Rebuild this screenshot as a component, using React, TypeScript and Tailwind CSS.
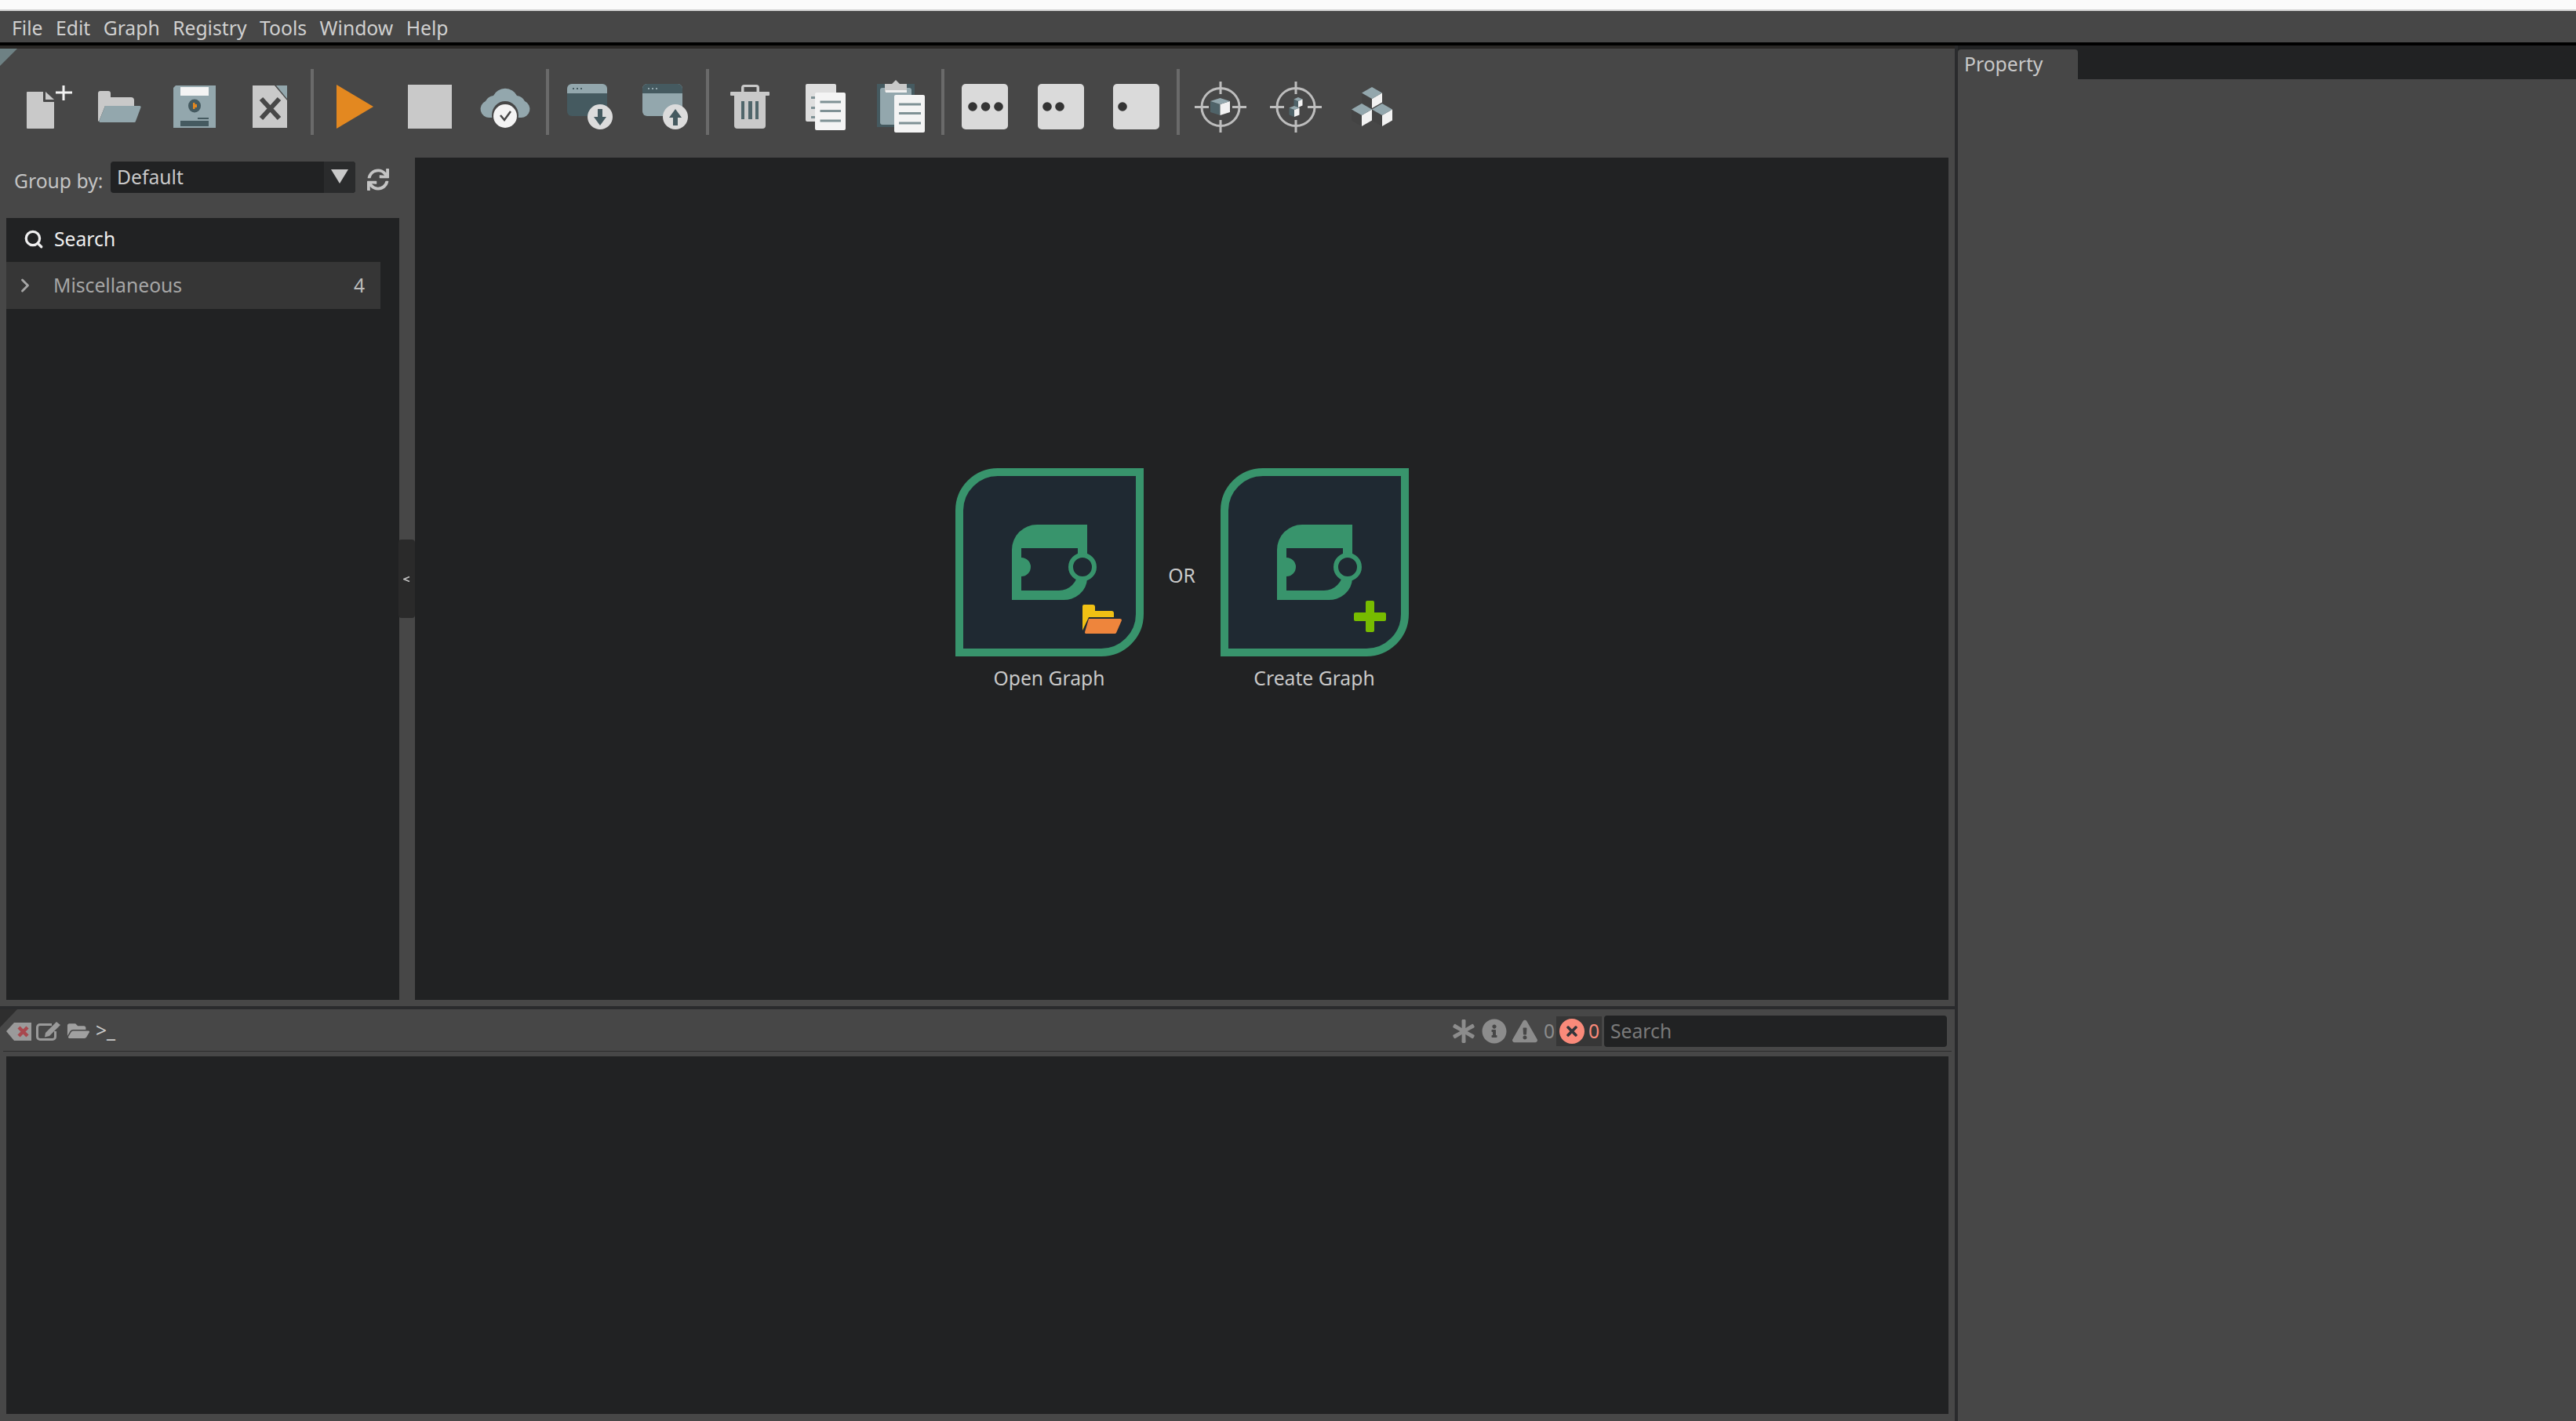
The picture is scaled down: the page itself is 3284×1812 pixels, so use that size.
import React from 'react';
import { ChevronRight, Search } from 'lucide-react';
import { FaAsterisk, FaExclamationTriangle, FaFolderOpen, FaInfoCircle, FaSync, FaTimes } from 'react-icons/fa';

const MENU = ['File', 'Edit', 'Graph', 'Registry', 'Tools', 'Window', 'Help'];

const BLUE = '#93a7ad';
const SLATE = '#455a60';
const LIGHT = '#c9c9c9';

const Ico: React.FC<{ children: React.ReactNode }> = ({ children }) => (
  <button className="w-[96px] h-[96px] shrink-0 -mb-[12px]">
    <svg className="block" width="96" height="96" viewBox="0 0 96 96">{children}</svg>
  </button>
);

const Sep = () => <div className="w-[4px] h-[84px] mx-[4px] shrink-0 bg-[#6a6a6a]" />;

const Cube = ({ cx, top, w, h, s, side = '#4f6369' }: { cx: number; top: number; w: number; h: number; s: number; side?: string }) => (
  <g>
    <path d={`M${cx - w / 2} ${top + h / 2}L${cx} ${top + h}V${top + h + s}L${cx - w / 2} ${top + h / 2 + s}Z`} fill={side} />
    <path d={`M${cx + w / 2} ${top + h / 2}L${cx} ${top + h}V${top + h + s}L${cx + w / 2} ${top + h / 2 + s}Z`} fill="#f2f2f2" />
    <path d={`M${cx} ${top}L${cx + w / 2} ${top + h / 2}L${cx} ${top + h}L${cx - w / 2} ${top + h / 2}Z`} fill={BLUE} />
  </g>
);

const Target = ({ children }: { children: React.ReactNode }) => (
  <Ico>
    <circle cx="48" cy="48.5" r="24" fill="none" stroke="#bdbdbd" strokeWidth="3" />
    <path d="M15 48.5H33M63 48.5H81M48 16V32M48 65V81" stroke="#bdbdbd" strokeWidth="3" fill="none" />
    {children}
  </Ico>
);

const Dots = ({ xs, x = 18 }: { xs: number[]; x?: number }) => (
  <Ico>
    <rect x={x} y="19" width="59" height="58" rx="5" fill="#dadada" />
    {xs.map((c) => (
      <circle key={c} cx={c} cy="48" r="5.8" fill="#343434" />
    ))}
  </Ico>
);

const Toolbar = () => (
  <div className="h-[139px] pl-[8px] pt-[26px] flex items-start relative">
    <div className="absolute left-0 top-0 w-0 h-0 border-t-[22px] border-r-[22px] border-t-[#6e8184] border-r-transparent" />
    <div className="flex items-center h-[84px]">
      <Ico>
        <path d="M27 29H47V41a1 1 0 0 0 1 1H61V75a1 1 0 0 1-1 1H27a1 1 0 0 1-1-1V30a1 1 0 0 1 1-1Z" fill={LIGHT} />
        <path d="M50 29L61 39H50Z" fill={LIGHT} />
        <path d="M73 21V40M63 30H84" stroke="#f2f2f2" strokeWidth="3" />
      </Ico>
      <Ico>
        <path d="M21 31a3 3 0 0 1 3-3H34a3 3 0 0 1 3 3V36H63a4 4 0 0 1 4 4V47H30L22 67L21 66Z" fill={LIGHT} />
        <path d="M30 47H74a1.5 1.5 0 0 1 1.5 2L69 66.500a2 2 0 0 1-2 1.500H24a1.500 1.500 0 0 1-1.500-2Z" fill={BLUE} />
      </Ico>
      <Ico>
        <path d="M24 21H75V75H21V24Z" fill={BLUE} />
        <rect x="30" y="23" width="36" height="11" fill="#f4f4f4" />
        <ellipse cx="48" cy="47" rx="8" ry="8.500" fill={SLATE} />
        <path d="M46 43H48.500V45H51V49H48.500V51H46Z" fill="#e38820" />
        <rect x="52" y="62" width="14" height="2" fill={SLATE} />
        <rect x="30" y="66" width="36" height="7" fill={SLATE} />
      </Ico>
      <Ico>
        <path d="M26 21H54L70 40V75H26Z" fill={LIGHT} />
        <path d="M56 21H70V38Z" fill={BLUE} />
        <path d="M37 38L60 63M60 38L37 63" stroke="#474747" strokeWidth="6" fill="none" />
      </Ico>
      <Sep />
      <Ico>
        <path d="M25 20L72 48L25 76Z" fill="#e38820" />
      </Ico>
      <Ico>
        <rect x="20" y="20" width="56" height="56" fill={LIGHT} />
      </Ico>
      <Ico>
        <path d="M28 62a11 11 0 0 1-5-21a13 13 0 0 1 10-7a16 14 0 0 1 30 0a13 13 0 0 1 10 7a11 11 0 0 1-5 21Z" fill={BLUE} />
        <ellipse cx="48" cy="59" rx="17" ry="18" fill="#474747" />
        <ellipse cx="48" cy="60" rx="15" ry="15" fill="#f4f4f4" />
        <path d="M42 59L47 65L55 54" stroke="#474747" strokeWidth="2.500" fill="none" />
      </Ico>
      <Sep />
      <Ico>
        <rect x="19" y="19" width="51" height="41" rx="6" fill={SLATE} />
        <path d="M19 31V25a6 6 0 0 1 6-6H64a6 6 0 0 1 6 6V31Z" fill={BLUE} />
        <path d="M26 24h2v2h-2zM31 24h2v2h-2zM36 24h2v2h-2z" fill={SLATE} />
        <circle cx="61" cy="61" r="16" fill="#dcdcdc" />
        <path d="M58 51H64V61H69L61 72L53 61H58Z" fill={SLATE} />
      </Ico>
      <Ico>
        <rect x="19" y="19" width="51" height="41" rx="6" fill={BLUE} />
        <path d="M19 31V25a6 6 0 0 1 6-6H64a6 6 0 0 1 6 6V31Z" fill={SLATE} />
        <path d="M26 24h2v2h-2zM31 24h2v2h-2zM36 24h2v2h-2z" fill={BLUE} />
        <circle cx="61" cy="61" r="16" fill="#dcdcdc" />
        <path d="M58 72H64V62H69L61 51L53 62H58Z" fill={SLATE} />
      </Ico>
      <Sep />
      <Ico>
        <path d="M23 30a1 1 0 0 1 1-1H37V24a4 4 0 0 1 4-4H56a4 4 0 0 1 4 4V29H72a1 1 0 0 1 1 1V33a1 1 0 0 1-1 1H24a1 1 0 0 1-1-1Z" fill={LIGHT} />
        <rect x="40.500" y="23" width="16" height="6" fill="#474747" />
        <path d="M28 34H68V72a4 4 0 0 1-4 4H32a4 4 0 0 1-4-4Z" fill={LIGHT} />
        <path d="M37 41h4v23h-4zM46 41h5v23h-5zM55 41h4v23h-4z" fill="#50666b" />
      </Ico>
      <Ico>
        <rect x="23" y="19" width="39" height="48" rx="2" fill="#dedede" />
        <path d="M30 35h6v3h-6zM30 48h6v3h-6zM30 60h6v3h-6z" fill="#7f9195" />
        <rect x="35" y="30" width="39" height="48" rx="2" fill="#f4f4f4" />
        <path d="M41.500 40.500h26.500v3h-26.500zM41.500 52h26.500v3h-26.500zM41.500 64.500h26.500v3h-26.500z" fill="#7f9195" />
      </Ico>
      <Ico>
        <rect x="18" y="19" width="48" height="55" fill={SLATE} />
        <rect x="22" y="24" width="40" height="47" rx="3" fill={BLUE} />
        <path d="M28 19H37L42 14L47 19H56V29H28Z" fill={LIGHT} />
        <rect x="29" y="27" width="27" height="3" fill="#f0f0f0" />
        <rect x="40" y="33" width="39" height="48" rx="2" fill="#f4f4f4" />
        <path d="M46 43.500h28v3h-28zM46 55h28v3h-28zM46 67.500h28v3h-28z" fill="#7f9195" />
      </Ico>
      <Sep />
      <Dots xs={[32, 48.500, 65]} />
      <Dots xs={[31, 47]} x={19} />
      <Dots xs={[31]} x={19} />
      <Sep />
      <Target>
        <Cube cx={47.500} top={37} w={25} h={8} s={14} />
      </Target>
      <Target>
        <Cube cx={51} top={36} w={11} h={5} s={8} />
        <Cube cx={46} top={47} w={13} h={5} s={9} />
      </Target>
      <Ico>
        <Cube cx={49} top={23} w={26} h={15} s={12} side="#434343" />
        <Cube cx={36} top={44} w={26} h={15} s={14} side="#434343" />
        <Cube cx={62} top={44} w={26} h={15} s={14} side="#434343" />
      </Ico>
    </div>
  </div>
);

const LeftPanel = () => (
  <div className="w-[529px] shrink-0 relative flex flex-col">
    <div className="h-[77px] flex items-start pt-[5px] pl-[18px]">
      <span className="w-[123px] h-[40px] mt-[5px] flex items-center text-[24.7px] text-[#c4c4c4]">Group by:</span>
      <div className="w-[312px] h-[40px] rounded-[4px] bg-[#212223] flex overflow-hidden">
        <span className="flex-1 pl-[8px] flex items-center text-[24.7px] text-[#c9c9c9]">Default</span>
        <span className="w-[40px] bg-[#2a2b2c] flex items-start justify-center pt-[10px]">
          <svg width="22" height="18" viewBox="0 0 22 18"><path d="M0 0H22L11 18Z" fill="#c9c9c9" /></svg>
        </span>
      </div>
      <FaSync className="w-[28px] h-[28px] ml-[15px] mt-[9px] text-[#c4c4c4]" />
    </div>
    <div className="ml-[8px] w-[501px] flex-1 bg-[#212223]">
      <div className="h-[56px] flex items-center pl-[22px]">
        <Search className="w-[26px] h-[26px] text-[#efefef] -mt-[2px]" strokeWidth={3} />
        <span className="ml-[13px] text-[24.7px] text-[#efefef] -mt-[2px]">Search</span>
      </div>
      <div className="w-[477px] h-[60px] bg-[#363636] flex items-center pl-[12px] pr-[20px] text-[#a6a6a6]">
        <ChevronRight className="w-[28px] h-[28px] -ml-[2px]" strokeWidth={2.500} />
        <span className="ml-[22px] flex-1 text-[24.7px]">Miscellaneous</span>
        <span className="text-[24.7px] text-[#bdbdbd]">4</span>
      </div>
    </div>
    <div className="absolute left-[508px] top-[487px] w-[21px] h-[100px] rounded-[4px] bg-[#2a2a2a] flex items-center justify-center">
      <svg width="9" height="9" viewBox="0 0 9 9"><path d="M8 1.500L1 4.500L8 7.500" fill="none" stroke="#c4c4c4" strokeWidth="1.500" /></svg>
    </div>
  </div>
);

const Logo = () => (
  <>
    <path
      fillRule="evenodd"
      d="M72 168V104A32 32 0 0 1 104 72H168V140A30 28 0 0 1 136 168ZM84 102V114A12 12 0 0 1 84 138V156H132A24 24 0 0 0 156 132V102Z"
      fill="#38946c"
    />
    <circle cx="162" cy="126" r="15" fill="#1f2932" stroke="#38946c" strokeWidth="6" />
  </>
);

const GraphCard: React.FC<{ label: string; children: React.ReactNode }> = ({ label, children }) => (
  <div className="flex flex-col items-center w-[240px]">
    <div className="w-[240px] h-[240px] bg-[#1f2932] border-[10px] border-[#38946c] rounded-tl-[54px] rounded-br-[54px] relative">
      <svg className="absolute -left-[10px] -top-[10px]" width="240" height="240" viewBox="0 0 240 240">
        <Logo />
        {children}
      </svg>
    </div>
    <span className="mt-[9px] text-[24.7px] text-[#c9c9c9]">{label}</span>
  </div>
);

const Central = () => (
  <div className="w-[1955px] shrink-0 bg-[#212223] flex items-center justify-center pt-[4px]">
    <GraphCard label="Open Graph">
      <path d="M162 176a2 2 0 0 1 2-2H175a3 3 0 0 1 3 3V182H199a3 3 0 0 1 3 3V190H170L162 207Z" fill="#f0c014" />
      <path d="M170 192H210a2 2 0 0 1 2 2L205 210a2 2 0 0 1-2 1H166a2 2 0 0 1-1-2Z" fill="#ee853c" />
    </GraphCard>
    <span className="w-[98px] text-center text-[24.7px] text-[#c9c9c9] -mt-[12px]">OR</span>
    <GraphCard label="Create Graph">
      <path d="M185 171a2 2 0 0 1 2-2H194a2 2 0 0 1 2 2V184H209a2 2 0 0 1 2 2V193a2 2 0 0 1-2 2H196V207a2 2 0 0 1-2 2H187a2 2 0 0 1-2-2V195H172a2 2 0 0 1-2-2V186a2 2 0 0 1 2-2H185Z" fill="#77bb00" />
    </GraphCard>
  </div>
);

const ConsoleBar = () => (
  <div className="h-[54px] relative flex items-start pt-[15px] pl-[8px] border-b-[1px] border-[#2c2c2c] ml-[4px] mr-[4px]">
    <div className="absolute -left-[4px] top-0 w-0 h-0 border-t-[23px] border-r-[22px] border-t-[#2e2e2e] border-r-transparent" />
    <svg className="-ml-[4px]" width="32" height="25" viewBox="0 0 32 25">
      <path d="M10 2H32V25H10L0 13Z" fill="#9a9a9a" />
      <path d="M16 8L27 19M27 8L16 19" stroke="#a8484e" strokeWidth="4.500" />
    </svg>
    <svg className="ml-[6px]" width="32" height="25" viewBox="0 0 32 25">
      <path d="M20 4.500H5a3.500 3.500 0 0 0-3.500 3.500V20a3.500 3.500 0 0 0 3.500 3.500H21a3.500 3.500 0 0 0 3.500-3.500V13" fill="none" stroke="#9a9a9a" strokeWidth="3" />
      <path d="M26 1L31 5L17 19L11 20.500L12 15Z" fill="#9a9a9a" />
    </svg>
    <FaFolderOpen className="ml-[6px] w-[32px] h-[25px] text-[#a0a0a0]" />
    <span className="ml-[6px] text-[24.7px] leading-[24px] text-[#c9c9c9]">&gt;_</span>
    <div className="flex-1" />
    <div className="flex items-center h-[40px] -mt-[7px] pr-[6px]">
      <FaAsterisk className="w-[30px] h-[30px] text-[#8c8c8c]" />
      <FaInfoCircle className="ml-[8px] w-[32px] h-[32px] text-[#8c8c8c]" />
      <FaExclamationTriangle className="ml-[7px] w-[32px] h-[32px] text-[#8c8c8c]" />
      <span className="ml-[8px] w-[16px] text-[24.7px] text-[#8c8c8c]">0</span>
      <div className="w-[58px] h-[38px] bg-[#363636] flex items-center pl-[4px]">
        <span className="w-[32px] h-[32px] rounded-full bg-[#fa8a7a] flex items-center justify-center">
          <FaTimes className="w-[20px] h-[20px] text-[#33353a]" />
        </span>
        <span className="ml-[5px] text-[24.7px] text-[#fa8a7a]">0</span>
      </div>
      <div className="ml-[3px] w-[437px] h-[40px] rounded-[4px] bg-[#212223] flex items-center pl-[8px] text-[24.7px] text-[#7a7a7a]">Search</div>
    </div>
  </div>
);

export default function App() {
  return (
    <div className="w-[3284px] h-[1812px] overflow-hidden flex flex-col bg-[#474747] font-['Noto_Sans',sans-serif]">
      <div className="h-[12px] bg-[#fbfbfb]" />
      <div className="h-[2px] bg-[#d2d2d2]" />
      <div className="h-[40px] flex items-center pl-[15px] pt-[3px] gap-[16.5px] text-[24.7px] text-[#d0d0d0]">
        {MENU.map((m) => (
          <span key={m}>{m}</span>
        ))}
      </div>
      <div className="h-[4px] bg-black" />
      <div className="flex-1 flex">
        <div className="w-[2492px] shrink-0 flex flex-col">
          <div className="h-[4px] bg-[#2a2826]" />
          <Toolbar />
          <div className="h-[1074px] flex">
            <LeftPanel />
            <Central />
          </div>
          <div className="h-[8px]" />
          <div className="h-[4px] bg-[#2a2b2d]" />
          <ConsoleBar />
          <div className="h-[6px]" />
          <div className="h-[456px] ml-[8px] w-[2476px] bg-[#212223]" />
        </div>
        <div className="w-[4px] shrink-0 bg-[#2a2b2d]" />
        <div className="flex-1 flex flex-col">
          <div className="h-[43px] bg-[#212223] pt-[5px]">
            <div className="w-[153px] h-[38px] rounded-t-[4px] bg-[#474747] pl-[8px] flex items-center text-[24.7px] text-[#c9c9c9]">Property</div>
          </div>
        </div>
      </div>
    </div>
  );
}
